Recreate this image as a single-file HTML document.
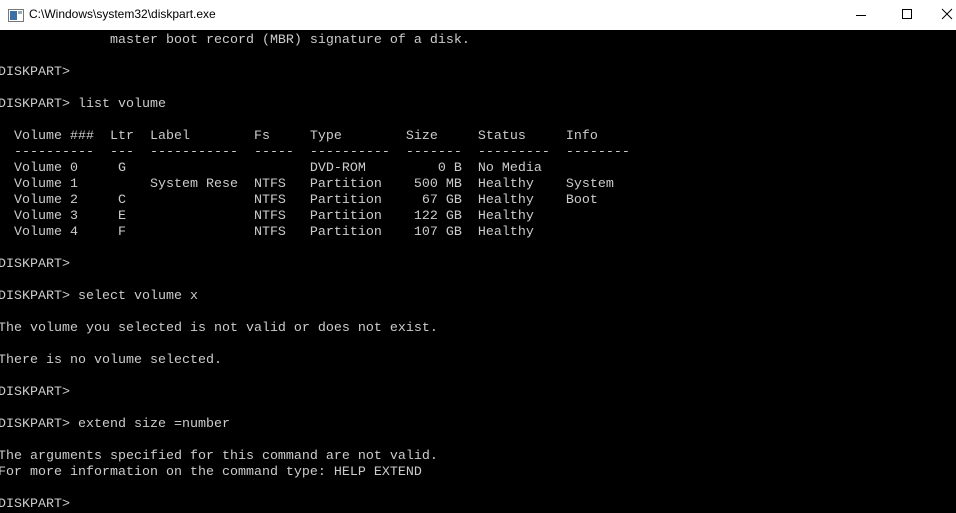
<!DOCTYPE html>
<html><head><style>
body{margin:0;width:956px;height:511px;overflow:hidden;background:#000;font-family:"Liberation Sans",sans-serif}
#t{position:absolute;left:0;top:0;width:956px;height:30px;background:#fff}
#t .ttl{position:absolute;left:29px;top:7px;font-size:12px;color:#000}
#ic{position:absolute;left:8px;top:9px;width:14px;height:11px;border:1px solid #777;background:#fff}
#ic:before{content:"";position:absolute;left:1px;top:1px;width:7px;height:9px;background:#3a6fa8}
#ic:after{content:"";position:absolute;left:9px;top:1px;width:4px;height:3px;background:#9ab}
pre{position:absolute;left:-2px;top:33px;margin:0;font-family:"Liberation Mono",monospace;font-size:13.33px;line-height:16px;color:#cccccc}
</style></head><body>
<div id="t"><div id="ic"></div><div class="ttl">C:\Windows\system32\diskpart.exe</div>
<svg style="position:absolute;left:850px;top:8px" width="106" height="14">
<line x1="6" y1="7.5" x2="16" y2="7.5" stroke="#000"/>
<rect x="52.5" y="1.5" width="9" height="9" fill="none" stroke="#000"/>
<line x1="92" y1="1" x2="102" y2="11" stroke="#000"/><line x1="102" y1="1" x2="92" y2="11" stroke="#000"/>
</svg></div>
<pre>              master boot record (MBR) signature of a disk.

DISKPART&gt;

DISKPART&gt; list volume

  Volume ###  Ltr  Label        Fs     Type        Size     Status     Info
  ----------  ---  -----------  -----  ----------  -------  ---------  --------
  Volume 0     G                       DVD-ROM         0 B  No Media
  Volume 1         System Rese  NTFS   Partition    500 MB  Healthy    System
  Volume 2     C                NTFS   Partition     67 GB  Healthy    Boot
  Volume 3     E                NTFS   Partition    122 GB  Healthy
  Volume 4     F                NTFS   Partition    107 GB  Healthy

DISKPART&gt;

DISKPART&gt; select volume x

The volume you selected is not valid or does not exist.

There is no volume selected.

DISKPART&gt;

DISKPART&gt; extend size =number

The arguments specified for this command are not valid.
For more information on the command type: HELP EXTEND

DISKPART&gt;</pre>
</body></html>
